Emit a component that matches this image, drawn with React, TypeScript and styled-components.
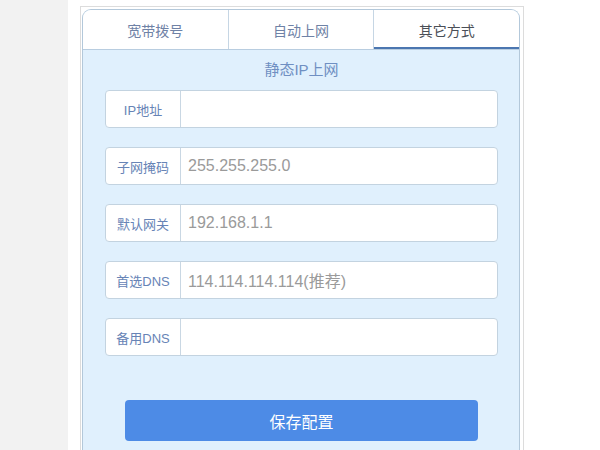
import * as React from 'react';
import styled, { createGlobalStyle } from 'styled-components';

const GlobalStyle = createGlobalStyle`
  html, body {
    margin: 0;
    padding: 0;
    background: #ffffff;
    font-family: "Liberation Sans", "Noto Sans CJK SC", sans-serif;
  }
`;

const Page = styled.div`
  display: flex;
  width: 600px;
  height: 450px;
  overflow: hidden;
`;

const SideStrip = styled.div`
  width: 68px;
  flex-shrink: 0;
  background: #f2f2f2;
`;

const Main = styled.div`
  flex: 1;
  background: #ffffff;
  padding: 6px 0 0 12px;
`;

const Frame = styled.div`
  width: 440px;
  height: 460px;
  border: 1px solid #dcdcdc;
  border-bottom: none;
  padding: 2px 1px 0 1px;
  box-sizing: content-box;
`;

const Panel = styled.div`
  width: 436px;
  height: 460px;
  border: 1px solid #b3c8da;
  border-bottom: none;
  border-radius: 9px 9px 0 0;
  overflow: hidden;
  background: #e0f0fd;
`;

const Tabs = styled.div`
  display: flex;
  height: 39px;
  background: #ffffff;
  border-bottom: 1px solid #b8cde0;
`;

const Tab = styled.div<{ $active?: boolean }>`
  flex: 1;
  display: flex;
  align-items: center;
  justify-content: center;
  font-size: 14px;
  color: ${p => (p.$active ? '#4a4f57' : '#6f82a6')};
  border-left: 1px solid #c6d6e4;
  box-shadow: ${p => (p.$active ? 'inset 0 -2px 0 #4b76b0' : 'none')};
  &:first-child {
    border-left: none;
  }
`;

const Body = styled.div`
  padding: 10px 21px 0 22px;
  display: flex;
  flex-direction: column;
`;

const Title = styled.div`
  text-align: center;
  font-size: 15px;
  line-height: 20px;
  color: #6f8fc2;
  margin-bottom: 10px;
`;

const Fields = styled.div`
  display: flex;
  flex-direction: column;
  gap: 19px;
`;

const Field = styled.div`
  display: flex;
  height: 36px;
  border: 1px solid #c3d3e0;
  border-radius: 4px;
  background: #ffffff;
  overflow: hidden;
`;

const Label = styled.div`
  width: 74px;
  flex-shrink: 0;
  display: flex;
  align-items: center;
  justify-content: center;
  font-size: 13px;
  color: #6784b6;
  border-right: 1px solid #c9d7e3;
`;

const Value = styled.div`
  flex: 1;
  display: flex;
  align-items: center;
  padding-left: 7px;
  font-size: 16px;
  color: #9a9a9a;
`;

const SaveButton = styled.button`
  margin: 44px 20px 0 20px;
  height: 41px;
  border: none;
  border-radius: 4px;
  background: #4d8be6;
  color: #ffffff;
  font-family: "Liberation Sans", "Noto Sans CJK SC", sans-serif;
  font-size: 16px;
`;

const fields = [
  { label: 'IP地址', value: '' },
  { label: '子网掩码', value: '255.255.255.0' },
  { label: '默认网关', value: '192.168.1.1' },
  { label: '首选DNS', value: '114.114.114.114(推荐)' },
  { label: '备用DNS', value: '' },
];

export default function App() {
  return (
    <>
      <GlobalStyle />
      <Page>
        <SideStrip />
        <Main>
          <Frame>
            <Panel>
              <Tabs>
                <Tab>宽带拨号</Tab>
                <Tab>自动上网</Tab>
                <Tab $active>其它方式</Tab>
              </Tabs>
              <Body>
                <Title>静态IP上网</Title>
                <Fields>
                  {fields.map(f => (
                    <Field key={f.label}>
                      <Label>{f.label}</Label>
                      <Value>{f.value}</Value>
                    </Field>
                  ))}
                </Fields>
                <SaveButton>保存配置</SaveButton>
              </Body>
            </Panel>
          </Frame>
        </Main>
      </Page>
    </>
  );
}
